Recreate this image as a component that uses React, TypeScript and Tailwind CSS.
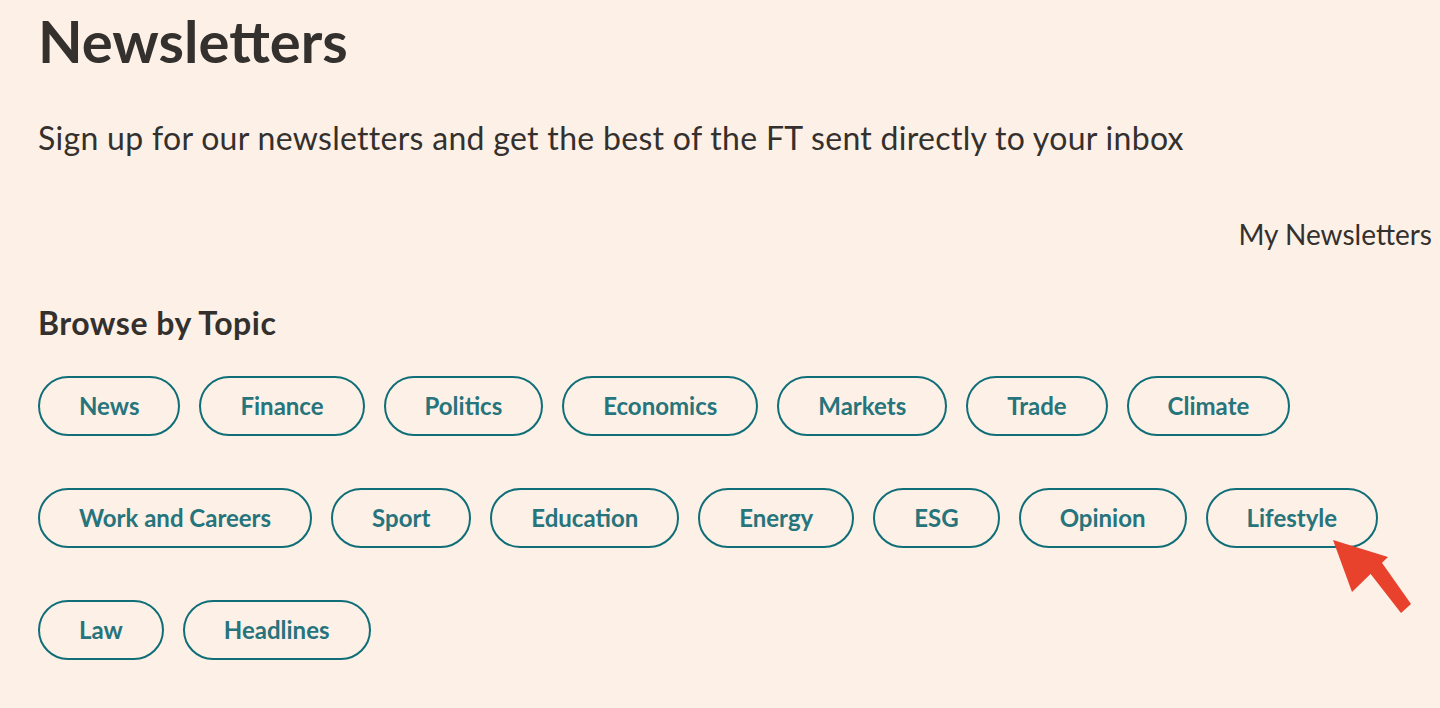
const topicRows = [
  ["News", "Finance", "Politics", "Economics", "Markets", "Trade", "Climate"],
  ["Work and Careers", "Sport", "Education", "Energy", "ESG", "Opinion", "Lifestyle"],
  ["Law", "Headlines"],
];

function TopicPill({ label }: { label: string }) {
  return (
    <button className="h-[60px] px-[39px] rounded-full border-2 border-[#0f6e78] text-[#26747c] text-[24px] font-bold leading-none whitespace-nowrap">
      {label}
    </button>
  );
}

export default function App() {
  return (
    <div className="relative min-h-screen w-full bg-[#fdf0e6] text-[#33302e] font-['Lato',sans-serif] overflow-hidden">
      <div className="pl-[38px] pr-[8px]">
        <h1 className="pt-[5px] text-[58px] font-bold leading-[72px]">Newsletters</h1>

        <p className="mt-[43px] text-[32px] leading-[36px] tracking-[0.3px]">
          Sign up for our newsletters and get the best of the FT sent directly to your inbox
        </p>

        <div className="mt-[62px] flex justify-end">
          <a className="text-[28px] leading-[32px]">My Newsletters</a>
        </div>

        <h2 className="mt-[55px] text-[32px] font-bold leading-[36px] tracking-[0.5px]">Browse by Topic</h2>

        <div className="mt-[35px] flex flex-col gap-[52px]">
          {topicRows.map((row, i) => (
            <div key={i} className="flex gap-[19px]">
              {row.map((t) => (
                <TopicPill key={t} label={t} />
              ))}
            </div>
          ))}
        </div>
      </div>

      {/* Annotation arrow */}
      <svg
        className="absolute left-[1320px] top-[530px]"
        width="100"
        height="90"
        viewBox="1320 530 100 90"
      >
        <polygon points="1333,540 1352,592 1388,557" fill="#e8412c" />
        <polygon points="1366,568 1380,560 1411,604 1401,613" fill="#e8412c" />
      </svg>
    </div>
  );
}
